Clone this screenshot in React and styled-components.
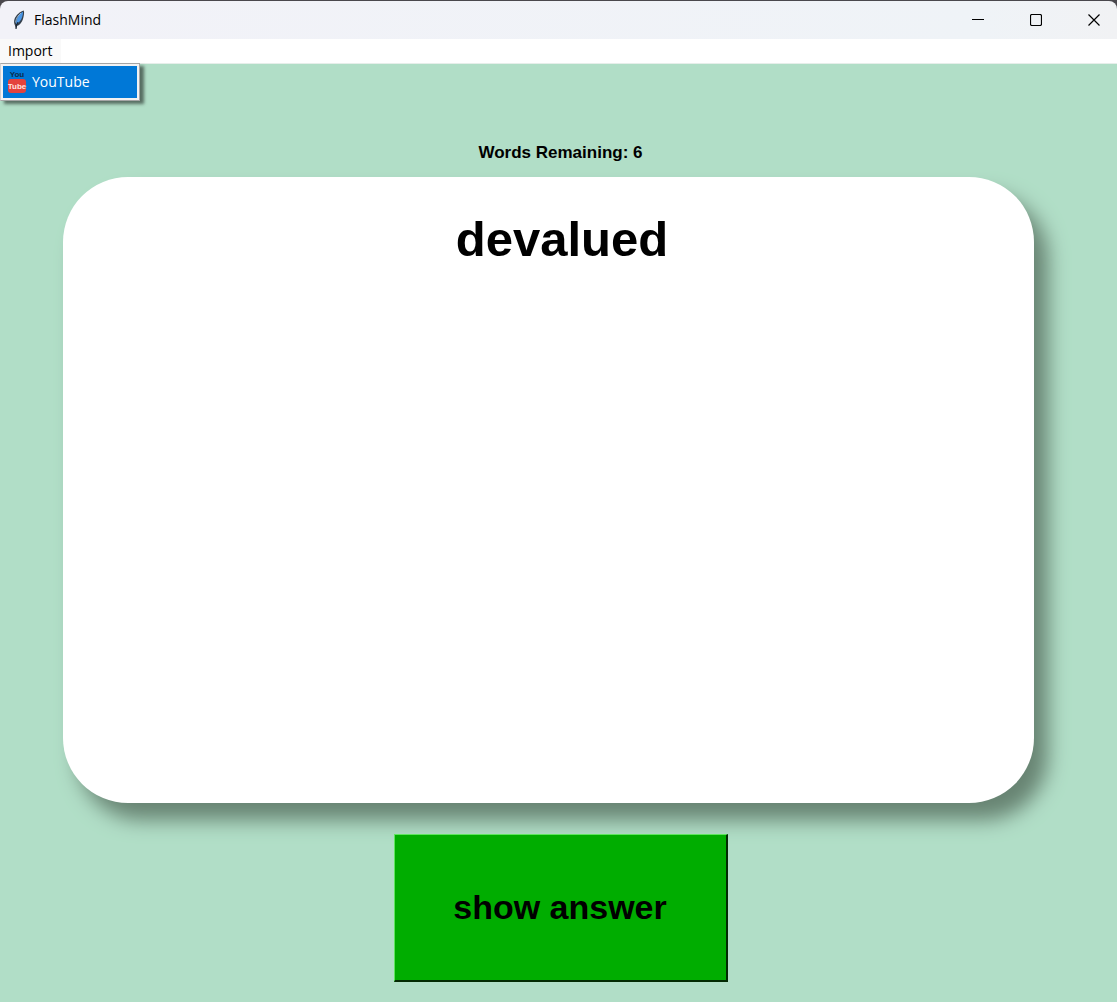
import React from "react";
import styled, { createGlobalStyle } from "styled-components";

const GlobalStyle = createGlobalStyle`
  *, *::before, *::after { box-sizing: border-box; }
  html, body { margin: 0; background: #4a484d; }
  button { font: inherit; color: inherit; margin: 0; cursor: default; }
`;

const uiFont = `"Open Sans", "Noto Sans", sans-serif`;
const cardFont = `"Liberation Sans", Arial, sans-serif`;

const AppWindow = styled.div`
  display: flex;
  flex-direction: column;
  min-height: 100vh;
  padding-top: 1px;
  color: #000;
`;

const TitleBar = styled.header`
  display: flex;
  align-items: center;
  justify-content: space-between;
  height: 38px;
  background: linear-gradient(90deg, #f2f2f8, #eff3f7 88%, #f1f2f4);
  border-radius: 8px 8px 0 0;
`;

const AppName = styled.h1`
  display: flex;
  align-items: center;
  gap: 8px;
  margin: 0;
  padding-left: 12px;
  font: 400 14px/20px ${uiFont};
`;

const WindowControls = styled.div`
  display: flex;
  height: 100%;
`;

const ControlButton = styled.button`
  display: grid;
  place-items: center;
  width: 58px;
  padding: 0 0 0 12px;
  border: 0;
  background: transparent;
`;

const MenuBar = styled.nav`
  position: relative;
  z-index: 1;
  height: 25px;
  background: #fff;
  border-bottom: 1px solid #e6eeea;
`;

const MenuButton = styled.button`
  height: 24px;
  padding: 0 8px;
  border: 0;
  background: #f9f9f9;
  font: 400 14px/24px ${uiFont};
`;

const MenuPopup = styled.div`
  position: absolute;
  top: 100%;
  left: 0;
  width: 140px;
  padding: 2px;
  background: #f2f2f2;
  border: 1px solid #a5a5a5;
  border-left-color: #d0d0d0;
  box-shadow: 4px 3px 3px rgba(0, 0, 0, 0.5);
`;

const MenuItem = styled.button`
  display: flex;
  align-items: center;
  gap: 5px;
  width: 100%;
  height: 32px;
  padding: 0 4px;
  border: 0;
  background: #0078d7;
  color: #fff;
  font: 400 14px/20px ${uiFont};
`;

const Deck = styled.main`
  display: flex;
  flex: 1;
  flex-direction: column;
  align-items: center;
  padding: 79px 59px 20px 63px;
  background: #b1dec7;
  font-family: ${cardFont};
  font-weight: 700;
`;

const Remaining = styled.p`
  margin: 0 0 14px;
  font-size: 17px;
  line-height: 20px;
`;

const Card = styled.section`
  display: flex;
  flex: 1;
  flex-direction: column;
  align-self: stretch;
  min-height: 320px;
  margin-right: 24px;
  padding: 32px 0 0 27px;
  background: #fff;
  border-radius: 65px;
  box-shadow: 14px 17px 20px #688473;
`;

const Word = styled.h2`
  margin: 0;
  font-size: 49px;
  line-height: 60px;
  text-align: center;
`;

const AnswerButton = styled.button`
  width: 334px;
  max-width: 100%;
  height: 148px;
  margin-top: 31px;
  padding: 0 0 2px;
  border: 2px solid;
  border-width: 1px 2px 2px 1px;
  border-color: #5ee65e #032a03 #032a03 #5ee65e;
  background: #00ad00;
  font-size: 34px;
  line-height: 40px;
  z-index: 1;
`;

function FeatherIcon() {
  return (
    <svg width="14" height="22" viewBox="0 0 14 22" aria-hidden="true">
      <path d="M11.8 1.500C8 2.500 4 6 2.500 10c-.8 2.500-.4 4.500.5 6.500L4 20l1-3c3-1 5-4 6-7 .8-3 1.500-6 .8-8.500Z" fill="#34404d" />
      <path d="M11 2.800C7.500 5 4.500 8 4 15c3-1 5.200-4 6-6.500.7-2 1.100-3.800 1-5.700Z" fill="#4a96e6" />
      <path d="M9 4C6 6.500 4 9.500 3.600 13.500" fill="none" stroke="#9fb4c6" strokeWidth="1" />
      <path d="M6 13 4.400 16.500 4 20" fill="none" stroke="#111b28" strokeWidth="1" />
    </svg>
  );
}

const LogoText = styled.text`
  font: 700 8px "Liberation Sans", Arial, sans-serif;
  text-anchor: middle;
`;

function YouTubeIcon() {
  return (
    <svg width="20" height="26" viewBox="0 0 20 26" aria-hidden="true">
      <LogoText x="10" y="8" fill="#0c2c4c">You</LogoText>
      <rect x="1" y="10" width="18" height="14" rx="3" fill="#e4433d" />
      <LogoText x="10" y="20" fill="#ffe5e2">Tube</LogoText>
    </svg>
  );
}

function Glyph({ children }) {
  return (
    <svg width="12" height="12" viewBox="0 0 12 12" fill="none" stroke="#000" aria-hidden="true">
      {children}
    </svg>
  );
}

export default function App() {
  return (
    <>
      <GlobalStyle />
      <AppWindow>
        <TitleBar>
          <AppName>
            <FeatherIcon />
            FlashMind
          </AppName>
          <WindowControls>
            <ControlButton aria-label="Minimize">
              <Glyph><path d="M0 5.500h12" /></Glyph>
            </ControlButton>
            <ControlButton aria-label="Maximize">
              <Glyph><rect x=".5" y=".5" width="11" height="11" rx="1.500" strokeWidth="1.200" /></Glyph>
            </ControlButton>
            <ControlButton aria-label="Close">
              <Glyph><path d="m.5.5 11 11m0-11-11 11" strokeWidth="1.200" /></Glyph>
            </ControlButton>
          </WindowControls>
        </TitleBar>
        <MenuBar>
          <MenuButton aria-haspopup="menu" aria-expanded="true">Import</MenuButton>
          <MenuPopup role="menu">
            <MenuItem role="menuitem">
              <YouTubeIcon />
              YouTube
            </MenuItem>
          </MenuPopup>
        </MenuBar>
        <Deck>
          <Remaining>Words Remaining: 6</Remaining>
          <Card>
            <Word>devalued</Word>
          </Card>
          <AnswerButton>show answer</AnswerButton>
        </Deck>
      </AppWindow>
    </>
  );
}
